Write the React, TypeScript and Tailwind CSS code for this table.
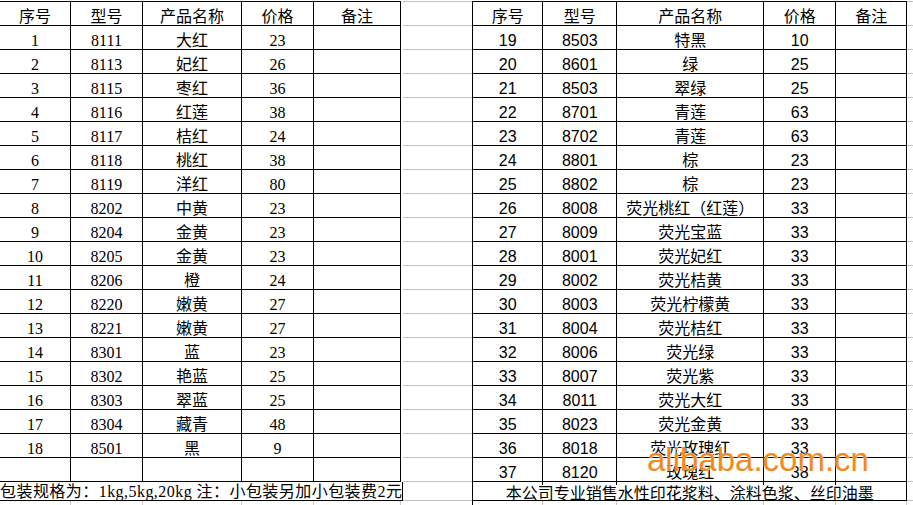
import React from "react";

type Row = [string, string, string, string];

const LEFT_ROWS: Row[] = [
  ["1", "8111", "大红", "23"],
  ["2", "8113", "妃红", "26"],
  ["3", "8115", "枣红", "36"],
  ["4", "8116", "红莲", "38"],
  ["5", "8117", "桔红", "24"],
  ["6", "8118", "桃红", "38"],
  ["7", "8119", "洋红", "80"],
  ["8", "8202", "中黄", "23"],
  ["9", "8204", "金黄", "23"],
  ["10", "8205", "金黄", "23"],
  ["11", "8206", "橙", "24"],
  ["12", "8220", "嫩黄", "27"],
  ["13", "8221", "嫩黄", "27"],
  ["14", "8301", "蓝", "23"],
  ["15", "8302", "艳蓝", "25"],
  ["16", "8303", "翠蓝", "25"],
  ["17", "8304", "藏青", "48"],
  ["18", "8501", "黑", "9"],
  ["", "", "", ""],
];

const RIGHT_ROWS: Row[] = [
  ["19", "8503", "特黑", "10"],
  ["20", "8601", "绿", "25"],
  ["21", "8503", "翠绿", "25"],
  ["22", "8701", "青莲", "63"],
  ["23", "8702", "青莲", "63"],
  ["24", "8801", "棕", "23"],
  ["25", "8802", "棕", "23"],
  ["26", "8008", "荧光桃红（红莲）", "33"],
  ["27", "8009", "荧光宝蓝", "33"],
  ["28", "8001", "荧光妃红", "33"],
  ["29", "8002", "荧光桔黄", "33"],
  ["30", "8003", "荧光柠檬黄", "33"],
  ["31", "8004", "荧光桔红", "33"],
  ["32", "8006", "荧光绿", "33"],
  ["33", "8007", "荧光紫", "33"],
  ["34", "8011", "荧光大红", "33"],
  ["35", "8023", "荧光金黄", "33"],
  ["36", "8018", "荧光玫瑰红", "33"],
  ["37", "8120", "玫瑰红", "38"],
];

const HEADER: [string, string, string, string, string] = [
  "序号",
  "型号",
  "产品名称",
  "价格",
  "备注",
];

const cell =
  "flex items-center justify-center whitespace-nowrap border-r border-black pt-[3px]";

function Sheet({
  rows,
  cols,
  font,
  footer,
  footerClass,
  leftBorder,
}: {
  rows: Row[];
  cols: string;
  font: string;
  footer: string;
  footerClass: string;
  leftBorder?: boolean;
}) {
  return (
    <div
      className={
        "flex flex-col text-[16px] text-black " +
        font +
        (leftBorder ? " border-l border-black" : "")
      }
    >
      <div className={"grid border-y border-black " + cols + " h-[25px]"}>
        {HEADER.map((h) => (
          <div key={h} className={cell}>
            {h}
          </div>
        ))}
      </div>
      {rows.map((r, i) => (
        <div key={i} className={"grid h-6 border-b border-black " + cols}>
          {r.map((v, j) => (
            <div key={j} className={cell}>
              {v}
            </div>
          ))}
          <div className={cell} />
        </div>
      ))}
      <div
        className={
          "flex h-[19px] items-center whitespace-nowrap border-r border-b border-black leading-[16px] " +
          footerClass
        }
      >
        {footer}
      </div>
      <div className={"grid h-2 " + cols}>
        {[0, 1, 2, 3, 4].map((k) => (
          <div key={k} className="border-r border-[#c8c8c8]" />
        ))}
      </div>
    </div>
  );
}

function GrayStrip({ width }: { width: string }) {
  return (
    <div className={"flex flex-col " + width}>
      <div className="h-[25px] border-y border-[#c0c0c0]" />
      {Array.from({ length: 19 }).map((_, i) => (
        <div key={i} className="h-6 border-b border-[#c0c0c0]" />
      ))}
      <div className="h-[19px] border-b border-[#c0c0c0]" />
    </div>
  );
}

export default function App() {
  return (
    <div className="relative h-[505px] w-[913px] overflow-hidden bg-white">
      <div className="flex pt-px">
        <Sheet
          rows={LEFT_ROWS}
          cols="grid-cols-[71px_72px_99px_72px_87px] w-[401px]"
          font="font-['Liberation_Serif','Noto_Sans_CJK_SC',serif]"
          footer="包装规格为：1kg,5kg,20kg 注：小包装另加小包装费2元"
          footerClass="justify-start pt-[1px] tracking-[0.45px] overflow-hidden"
        />
        <GrayStrip width="w-[72px]" />
        <Sheet
          rows={RIGHT_ROWS}
          cols="grid-cols-[70px_74px_147px_72px_71px] w-[434px]"
          font="font-['Liberation_Sans','Noto_Sans_CJK_SC',sans-serif]"
          footer="本公司专业销售水性印花浆料、涂料色浆、丝印油墨"
          footerClass="justify-center pt-[1px] font-['Noto_Sans_CJK_SC',sans-serif]"
          leftBorder
        />
        <GrayStrip width="w-[6px]" />
      </div>
      <div className="pointer-events-none absolute left-[647px] top-[443px] font-['Liberation_Sans',Arial,sans-serif] text-[33px] leading-[33px] text-[#f28a1c] [text-shadow:0_0_2px_#fff]">
        alibaba.com.cn
      </div>
    </div>
  );
}
